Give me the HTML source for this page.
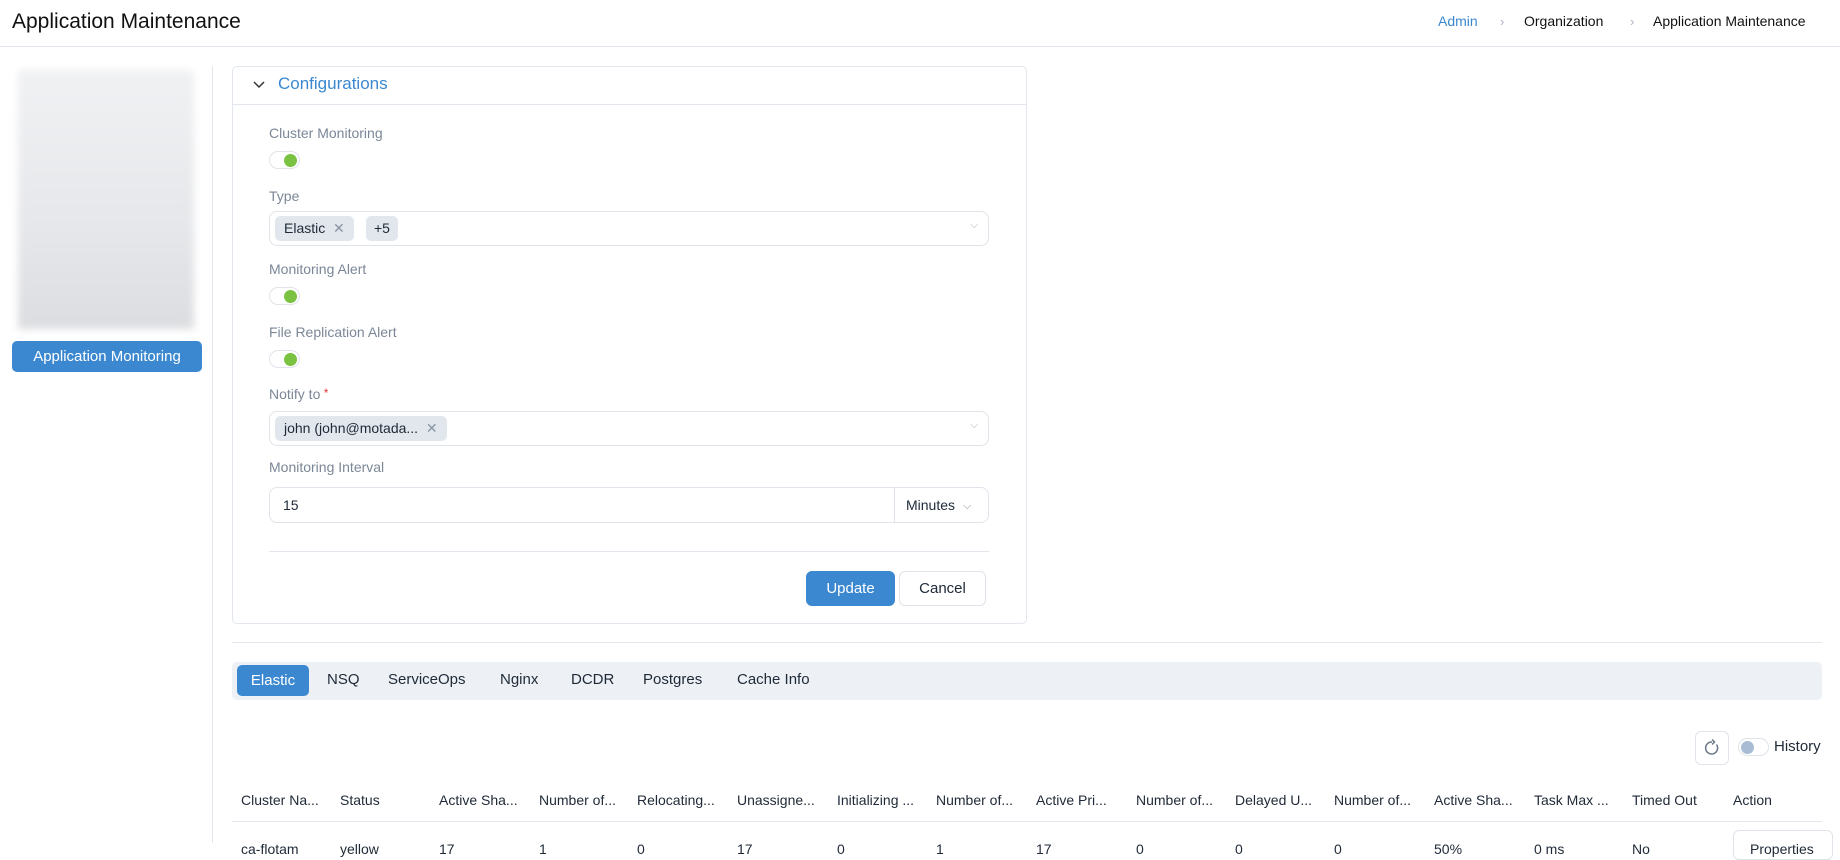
<!DOCTYPE html>
<html><head><meta charset="utf-8"><style>
*{box-sizing:border-box;margin:0;padding:0}
body{width:1840px;height:843px;overflow:hidden;background:#fff;font-family:"Liberation Sans",sans-serif;color:#1f2937;position:relative}
.a{position:absolute;white-space:nowrap}
.lbl{color:#7b8797;font-size:14px}
.tg{position:absolute;width:31px;height:18px;border:1px solid #dfe4ea;border-radius:9px;background:#fff}
.tg i{position:absolute;right:2px;top:2px;width:13px;height:13px;border-radius:50%;background:#7cc242}
.sel{position:absolute;left:269px;width:720px;border:1px solid #dfe4ea;border-radius:8px;background:#fff}
.chip{position:absolute;top:4px;height:25px;background:#e2e7ee;border-radius:5px;font-size:14px;line-height:25px;padding:0 9px;color:#1f2937}
.th{position:absolute;top:792px;font-size:14px;color:#1f2937}
.td{position:absolute;top:841px;font-size:14px;color:#1f2937}
</style></head><body>
<div class="a" style="left:12px;top:10px;font-size:21px;color:#111">Application Maintenance</div>
<div class="a" style="left:1438px;top:13px;font-size:14px;color:#3b88d0">Admin</div>
<div class="a" style="left:1500px;top:14px;font-size:13px;color:#a8b2bf">›</div>
<div class="a" style="left:1524px;top:13px;font-size:14px;color:#111">Organization</div>
<div class="a" style="left:1630px;top:14px;font-size:13px;color:#a8b2bf">›</div>
<div class="a" style="left:1653px;top:13px;font-size:14px;color:#111">Application Maintenance</div>
<div class="a" style="left:0;top:46px;width:1840px;height:1px;background:#e2e7ee"></div>

<div class="a" style="left:18px;top:70px;width:176px;height:259px;background:linear-gradient(180deg,#f0f1f3,#e6e7ea 60%,#dcdde0);filter:blur(4px)"></div>
<div class="a" style="left:12px;top:341px;width:190px;height:31px;background:#3b88d0;border-radius:5px;color:#fff;font-size:15px;line-height:31px;text-align:center">Application Monitoring</div>
<div class="a" style="left:212px;top:66px;width:1px;height:777px;background:#e2e7ee"></div>

<div class="a" style="left:232px;top:66px;width:795px;height:558px;border:1px solid #e2e7ee;border-radius:5px"></div>
<div class="a" style="left:233px;top:104px;width:793px;height:1px;background:#e2e7ee"></div>
<svg class="a" style="left:252px;top:80px" width="14" height="10"><path d="M2 2l5 5 5-5" fill="none" stroke="#333" stroke-width="1.5"/></svg>
<div class="a" style="left:278px;top:74px;font-size:17px;color:#3b88d0">Configurations</div>

<div class="a lbl" style="left:269px;top:125px">Cluster Monitoring</div>
<div class="tg" style="left:269px;top:151px"><i></i></div>
<div class="a lbl" style="left:269px;top:188px">Type</div>
<div class="sel" style="top:211px;height:35px"><div class="chip" style="left:5px">Elastic &nbsp;<span style="color:#8a94a3">✕</span></div><div class="chip" style="left:96px;padding:0 8px">+5</div><span class="a" style="right:10px;top:8px;color:#aab;font-size:10px">⌵</span></div>
<div class="a lbl" style="left:269px;top:261px">Monitoring Alert</div>
<div class="tg" style="left:269px;top:287px"><i></i></div>
<div class="a lbl" style="left:269px;top:324px">File Replication Alert</div>
<div class="tg" style="left:269px;top:350px"><i></i></div>
<div class="a lbl" style="left:269px;top:386px">Notify to<span style="color:#e53935;font-size:12px;vertical-align:top"> *</span></div>
<div class="sel" style="top:411px;height:35px"><div class="chip" style="left:5px">john (john@motada... &nbsp;<span style="color:#8a94a3">✕</span></div><span class="a" style="right:10px;top:8px;color:#aab;font-size:10px">⌵</span></div>
<div class="a lbl" style="left:269px;top:459px">Monitoring Interval</div>
<div class="sel" style="top:487px;height:36px"><span class="a" style="left:13px;top:9px;font-size:14px">15</span><div class="a" style="left:624px;top:0;width:1px;height:34px;background:#dfe4ea"></div><span class="a" style="left:636px;top:9px;font-size:14px">Minutes</span><span class="a" style="left:693px;top:12px;font-size:11px;color:#8a94a3">⌵</span></div>
<div class="a" style="left:269px;top:551px;width:720px;height:1px;background:#e2e7ee"></div>
<div class="a" style="left:806px;top:571px;width:89px;height:35px;background:#3b88d0;border-radius:6px;color:#fff;font-size:15px;line-height:35px;text-align:center">Update</div>
<div class="a" style="left:899px;top:571px;width:87px;height:35px;border:1px solid #dfe4ea;border-radius:6px;font-size:15px;line-height:33px;text-align:center">Cancel</div>

<div class="a" style="left:232px;top:642px;width:1590px;height:1px;background:#e2e7ee"></div>
<div class="a" style="left:232px;top:662px;width:1590px;height:38px;background:#edf1f5;border-radius:5px"></div>
<div class="a" style="left:237px;top:665px;width:72px;height:31px;background:#3b88d0;border-radius:5px;color:#fff;font-size:15px;line-height:31px;text-align:center">Elastic</div>
<div class="a" style="left:327px;top:671px;font-size:15px">NSQ</div>
<div class="a" style="left:388px;top:671px;font-size:15px">ServiceOps</div>
<div class="a" style="left:500px;top:671px;font-size:15px">Nginx</div>
<div class="a" style="left:571px;top:671px;font-size:15px">DCDR</div>
<div class="a" style="left:643px;top:671px;font-size:15px">Postgres</div>
<div class="a" style="left:737px;top:671px;font-size:15px">Cache Info</div>

<div class="a" style="left:1695px;top:731px;width:34px;height:34px;border:1px solid #dfe4ea;border-radius:6px"></div>
<svg class="a" style="left:1703px;top:739px" width="18" height="18"><path d="M13.5 5.5A6 6 0 1 1 9 3" fill="none" stroke="#6b7787" stroke-width="1.5"/><path d="M9 0.5l2.5 2.5L9 5.5" fill="none" stroke="#6b7787" stroke-width="1.5"/></svg>
<div class="a" style="left:1738px;top:738px;width:31px;height:18px;border:1px solid #dfe4ea;border-radius:9px"><i style="position:absolute;left:2px;top:2px;width:13px;height:13px;border-radius:50%;background:#a8bcd4"></i></div>
<div class="a" style="left:1774px;top:738px;font-size:15px">History</div>

<div class="th" style="left:241px">Cluster Na...</div><div class="th" style="left:340px">Status</div><div class="th" style="left:439px">Active Sha...</div><div class="th" style="left:539px">Number of...</div><div class="th" style="left:637px">Relocating...</div><div class="th" style="left:737px">Unassigne...</div><div class="th" style="left:837px">Initializing ...</div><div class="th" style="left:936px">Number of...</div><div class="th" style="left:1036px">Active Pri...</div><div class="th" style="left:1136px">Number of...</div><div class="th" style="left:1235px">Delayed U...</div><div class="th" style="left:1334px">Number of...</div><div class="th" style="left:1434px">Active Sha...</div><div class="th" style="left:1534px">Task Max ...</div><div class="th" style="left:1632px">Timed Out</div><div class="th" style="left:1733px">Action</div>
<div class="a" style="left:232px;top:821px;width:1590px;height:1px;background:#e2e7ee"></div>
<div class="td" style="left:241px">ca-flotam</div><div class="td" style="left:340px">yellow</div><div class="td" style="left:439px">17</div><div class="td" style="left:539px">1</div><div class="td" style="left:637px">0</div><div class="td" style="left:737px">17</div><div class="td" style="left:837px">0</div><div class="td" style="left:936px">1</div><div class="td" style="left:1036px">17</div><div class="td" style="left:1136px">0</div><div class="td" style="left:1235px">0</div><div class="td" style="left:1334px">0</div><div class="td" style="left:1434px">50%</div><div class="td" style="left:1534px">0 ms</div><div class="td" style="left:1632px">No</div>
<div class="a" style="left:1733px;top:830px;width:100px;height:30px;border:1px solid #dfe4ea;border-radius:6px;font-size:14px;padding:10px 0 0 16px">Properties</div>
</body></html>
